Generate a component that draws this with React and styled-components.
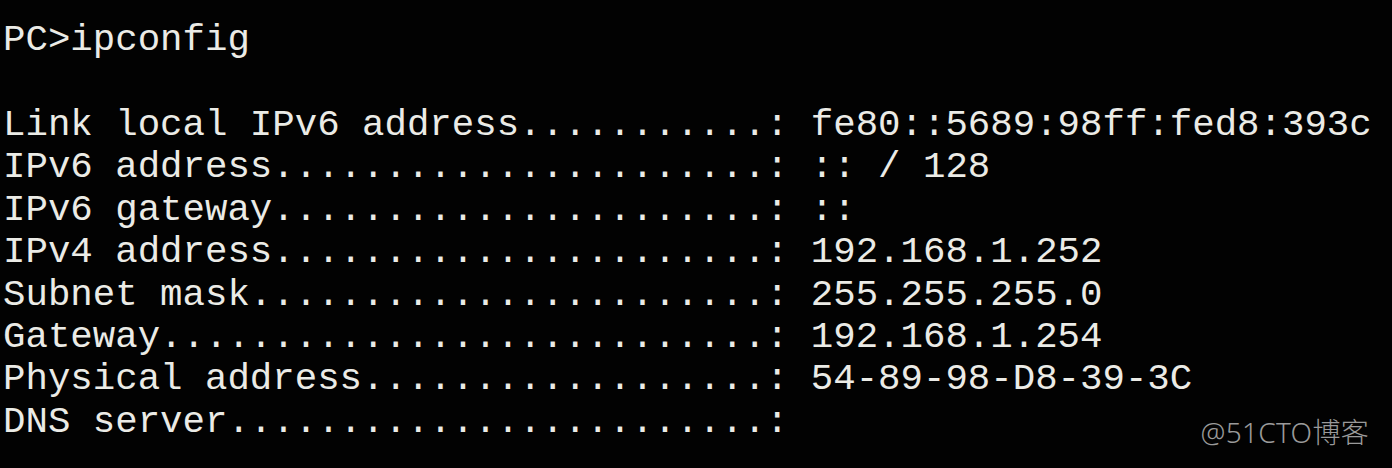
import React from "react";
import styled, { createGlobalStyle } from "styled-components";

const Global = createGlobalStyle`
  html, body { margin: 0; padding: 0; background: #000; }
  #root { width: 1392px; height: 468px; }
`;

const Screen = styled.div`
  position: relative;
  box-sizing: border-box;
  width: 1392px;
  height: 468px;
  overflow: hidden;
  background: #020202;
  padding: 19px 0 0 3px;
  display: flex;
  flex-direction: column;
`;

const Line = styled.div`
  font-family: "Courier New", "Liberation Mono", monospace;
  font-size: 37.4px;
  line-height: 42.43px;
  height: 42.43px;
  color: #ebebe6;
  white-space: pre;
  letter-spacing: 0;
`;

const Watermark = styled.div`
  position: absolute;
  right: 23px;
  bottom: 17px;
  font-family: "Noto Sans", "Noto Sans CJK SC", sans-serif;
  font-size: 28px;
  font-weight: 300;
  color: #9a9a9a;
  letter-spacing: 0.3px;
`;

const COL = 34;

const rows = [
  ["Link local IPv6 address", "fe80::5689:98ff:fed8:393c"],
  ["IPv6 address", ":: / 128"],
  ["IPv6 gateway", "::"],
  ["IPv4 address", "192.168.1.252"],
  ["Subnet mask", "255.255.255.0"],
  ["Gateway", "192.168.1.254"],
  ["Physical address", "54-89-98-D8-39-3C"],
  ["DNS server", ""],
];

const fmt = (label, value) =>
  label + ".".repeat(COL - label.length) + ": " + value;

export default function App() {
  return (
    <>
      <Global />
      <Screen>
        <Line>PC&gt;ipconfig</Line>
        <Line> </Line>
        {rows.map(([l, v]) => (
          <Line key={l}>{fmt(l, v)}</Line>
        ))}
        <Watermark>@51CTO博客</Watermark>
      </Screen>
    </>
  );
}
